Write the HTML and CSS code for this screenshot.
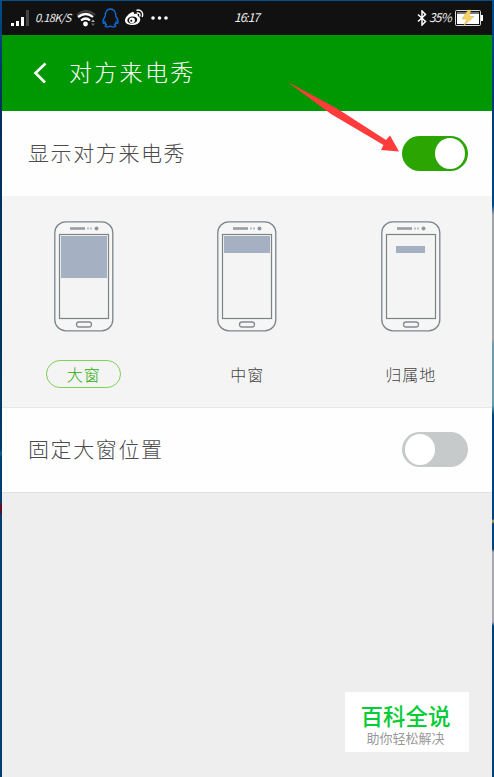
FILE: index.html
```html
<!DOCTYPE html>
<html lang="zh-CN">
<head>
    <meta charset="UTF-8">
    <meta name="viewport" content="width=device-width, initial-scale=1.0">
    <title>对方来电秀</title>
    <link rel="stylesheet" href="styles.css">
</head>
<body>
    <div class="screen">
        <div class="status-bar">
            <div class="status-left">
                <svg class="signal" width="18" height="16" viewBox="0 0 18 16">
                    <path d="M0 13h3v3H0zM5 11h3v5H5zM10 7h3v9h-3z" fill="#fff"/>
                    <path d="M15 0h3v16h-3z" fill="#444"/>
                </svg>
                <span class="speed">0.18K/S</span>
                <svg class="wifi" width="20" height="17" viewBox="0 0 20 17">
                    <path d="M1 5Q10-3 19 5" fill="none" stroke="#444" stroke-width="2"/>
                    <path d="M2 7Q10 1 17 7M5 10.5Q10 6.5 14 10.5" fill="none" stroke="#fff" stroke-width="2.2"/>
                    <circle cx="9.5" cy="14" r="2.4" fill="#fff"/>
                    <path d="M15 12l2-2.5 2 2.5z" fill="#aaa"/>
                    <path d="M15 13.5h4L17 16z" fill="#666"/>
                </svg>
                <svg class="qq" width="17" height="20" viewBox="0 0 17 20">
                    <path d="M3.3 8C3 3.5 5.3 1 8.5 1s5.5 2.5 5.2 7c1.7 2.3 2.6 5 2.2 7-.4.8-1.2.2-1.8-1-.3 1.3-.8 2-1.5 2.7 1.2.5 1.5 1.2.9 1.8-.9.7-3.8.6-5-.4-1.200 1-4.100 1.100-5 .4-.6-.6-.3-1.300.9-1.800-.7-.7-1.200-1.400-1.500-2.700-.6 1.200-1.400 1.800-1.800 1-.4-2 .5-4.700 2.200-7z" fill="none" stroke="#0b6fdc" stroke-width="1.300"/>
                </svg>
                <svg class="weibo" width="19" height="17" viewBox="0 0 19 17">
                    <path d="M7 3.300c1.500-.7 2.500.2 2 2 2.400-1 4.500-.4 3.700 1.700 5 2 2.500 9-5 9C2 16 0 13.800 0 11.500 0 8.500 4 4.500 7 3.300z" fill="#fff"/>
                    <ellipse cx="7.300" cy="11" rx="5" ry="3.500" fill="#111" transform="rotate(-8 7.300 11)"/>
                    <circle cx="7" cy="11.300" r="2.900" fill="#fff"/>
                    <circle cx="6.300" cy="11.800" r="1" fill="#111"/>
                    <path d="M12 1.200c4-.8 6.600 2.500 5.300 6.300M12.200 4c2-.3 3.200 1 2.600 3" fill="none" stroke="#fff" stroke-width="1.400" stroke-linecap="round"/>
                </svg>
                <svg class="more" width="17" height="4" viewBox="0 0 17 4">
                    <circle cx="2" cy="2" r="1.800" fill="#fff"/>
                    <circle cx="8.500" cy="2" r="1.800" fill="#fff"/>
                    <circle cx="15" cy="2" r="1.800" fill="#fff"/>
                </svg>
            </div>
            <span class="time">16:17</span>
            <div class="status-right">
                <svg class="bluetooth" width="10" height="16" viewBox="0 0 10 16">
                    <path d="M1 4.500l7.500 7L5 15V1l3.500 3.500L1 11.500" fill="none" stroke="#fff" stroke-width="1.500"/>
                </svg>
                <span class="percent">35%</span>
                <svg class="battery" width="28" height="18" viewBox="0 0 28 18">
                    <rect x=".5" y="1.500" width="25" height="15" rx="1" fill="#111" stroke="#ddd"/>
                    <path d="M2 3h22v2H2z" fill="#777"/>
                    <path d="M2 5h22v10H2zM26 6h2v6h-2z" fill="#fff"/>
                    <path d="M13 1L7 10h5l-3.500 7L19 7.500h-5L16 1z" fill="#fad45c" stroke="#bba25d" stroke-width=".4"/>
                </svg>
            </div>
        </div>

        <div class="header">
            <svg class="back" width="14" height="22" viewBox="0 0 14 22">
                <path d="M12.500 1.500L2.500 11l9.500 9.500" fill="none" stroke="#fff" stroke-width="2.600"/>
            </svg>
            <h1>对方来电秀</h1>
        </div>

        <div class="row">
            <span class="label">显示对方来电秀</span>
            <div class="switch on"><div class="knob"></div></div>
        </div>

        <div class="options">
            <div class="option selected">
                <svg class="phone" width="60" height="111" viewBox="0 0 60 111">
                    <rect x=".8" y=".8" width="58" height="109" rx="11" fill="#f6f6f6" stroke="#7c858a" stroke-width="1.300"/>
                    <path d="M16 7.500h15" stroke="#999ea2" stroke-width="2.600"/>
                    <path d="M33 7.500h2M36 7.500h2" stroke="#b3bec8" stroke-width="2"/>
                    <circle cx="42.500" cy="7.500" r="2" fill="#92979b"/>
                    <rect x="5.500" y="13.500" width="49" height="84" fill="#f4f4f4" stroke="#7b8383" stroke-width="1.200"/>
                    <rect x="7" y="15" width="46" height="42" fill="#a5b1c3"/>
                    <rect x="22.500" y="101" width="15" height="5" rx="2.500" fill="none" stroke="#858b91" stroke-width="1.300"/>
                </svg>
                <span class="name">大窗</span>
            </div>
            <div class="option">
                <svg class="phone" width="60" height="111" viewBox="0 0 60 111">
                    <rect x=".8" y=".8" width="58" height="109" rx="11" fill="#f6f6f6" stroke="#7c858a" stroke-width="1.300"/>
                    <path d="M16 7.500h15" stroke="#999ea2" stroke-width="2.600"/>
                    <path d="M33 7.500h2M36 7.500h2" stroke="#b3bec8" stroke-width="2"/>
                    <circle cx="42.500" cy="7.500" r="2" fill="#92979b"/>
                    <rect x="5.500" y="13.500" width="49" height="84" fill="#f4f4f4" stroke="#7b8383" stroke-width="1.200"/>
                    <rect x="7" y="15" width="46" height="17" fill="#a5b1c3"/>
                    <rect x="22.500" y="101" width="15" height="5" rx="2.500" fill="none" stroke="#858b91" stroke-width="1.300"/>
                </svg>
                <span class="name">中窗</span>
            </div>
            <div class="option">
                <svg class="phone" width="60" height="111" viewBox="0 0 60 111">
                    <rect x=".8" y=".8" width="58" height="109" rx="11" fill="#f6f6f6" stroke="#7c858a" stroke-width="1.300"/>
                    <path d="M16 7.500h15" stroke="#999ea2" stroke-width="2.600"/>
                    <path d="M33 7.500h2M36 7.500h2" stroke="#b3bec8" stroke-width="2"/>
                    <circle cx="42.500" cy="7.500" r="2" fill="#92979b"/>
                    <rect x="5.500" y="13.500" width="49" height="84" fill="#f4f4f4" stroke="#7b8383" stroke-width="1.200"/>
                    <rect x="15" y="25" width="29" height="7" fill="#a5b1c3"/>
                    <rect x="22.500" y="101" width="15" height="5" rx="2.500" fill="none" stroke="#858b91" stroke-width="1.300"/>
                </svg>
                <span class="name">归属地</span>
            </div>
        </div>

        <div class="row last">
            <span class="label">固定大窗位置</span>
            <div class="switch"><div class="knob"></div></div>
        </div>

        <div class="watermark">
            <strong>百科全说</strong>
            <span>助你轻松解决</span>
        </div>

        <!-- red pointer to the switch -->
        <svg class="arrow" width="114" height="72" viewBox="0 0 114 72">
            <path d="M1 .5L51 27.500 100 59l4-4.500 9 16-18-1.500 2.500-5L45 33z" fill="#ff3b3b"/>
        </svg>
    </div>
</body>
</html>
```

FILE: styles.css
```css
* {
    box-sizing: border-box;
}
body {
    margin: 0;
    height: 777px;
    padding: 1px 2px 0;
    overflow: hidden;
    font-family: "Noto Sans CJK SC", sans-serif;
    background:
        linear-gradient(#004c8c 0, #002f5c 110px, #003a68 450px, #0b6590 453px, #003e72 457px, #003e72 502px, #5c1028 504px, #5c1028 512px, #003e72 515px) left / 2px 100% no-repeat,
        linear-gradient(#004c8c 0, #003b70 110px, #004681 205px, #a2a3aa 215px, #a2a3aa 338px, #6b9bac 345px, #6b9bac 405px, #00427c 415px, #00427c 519px, #c4b742 521px, #00427c 524px, #00427c 549px, #aaa7b4 552px, #aaa7b4 622px, #003e72 626px) right / 2px 100% no-repeat,
        #00508f;
}
.screen {
    position: relative;
    display: flex;
    flex-direction: column;
    height: 776px;
    background: #eee;
}
.status-bar {
    display: grid;
    grid-template-columns: 232px 1fr auto;
    align-items: center;
    height: 34px;
    padding-right: 9px;
    color: #eee;
    background: #111;
    font-size: 12px;
    font-style: italic;
}
.status-left, .status-right {
    display: flex;
    align-items: center;
}
.status-left {
    padding-left: 9px;
}
.speed {
    width: 38px;
    margin: -3px 3px 0 6px;
    font-size: 11px;
    letter-spacing: -0.5px;
    white-space: nowrap;
}
.qq {
    margin-left: 6px;
}
.weibo {
    margin: -1px 0 0 6px;
}
.more {
    margin-left: 7px;
}
.time {
    margin-top: -3px;
    letter-spacing: -1px;
}
.percent {
    width: 23px;
    margin: -3px 3px 0 2px;
    letter-spacing: -0.8px;
}
.header {
    display: flex;
    align-items: center;
    height: 76px;
    padding-left: 31px;
    color: #fff;
    background: #009802;
}
h1 {
    margin: 0 0 4px 22px;
    font-size: 23px;
    font-weight: 300;
    letter-spacing: 2.3px;
}
.row {
    display: flex;
    align-items: center;
    justify-content: space-between;
    height: 85px;
    padding: 0 24px 0 26px;
    background: #fefefe;
}
.row.last {
    height: 86px;
    padding-bottom: 2px;
    border-top: 1px solid #e8e8e8;
    border-bottom: 1px solid #e2e2e2;
}
.label {
    padding-bottom: 3px;
    color: #4b4b4b;
    font-size: 21px;
    font-weight: 300;
    letter-spacing: 1.6px;
}
.switch {
    display: flex;
    width: 66px;
    height: 35px;
    padding: 2px 3px;
    border-radius: 18px;
    background: #c6caca;
}
.switch.on {
    justify-content: flex-end;
    background: #2aa502;
}
.knob {
    width: 30px;
    height: 31px;
    border-radius: 50%;
    background: #fff;
}
.options {
    display: grid;
    grid-template-columns: repeat(3, 163.5px);
    height: 211px;
    padding-top: 25px;
    background: #f4f4f4;
}
.option {
    display: flex;
    flex-direction: column;
    align-items: center;
}
.name {
    display: flex;
    align-items: center;
    justify-content: center;
    width: 75px;
    height: 28px;
    margin-top: 28px;
    padding-bottom: 1px;
    border: 1px solid transparent;
    border-radius: 14px;
    color: #444;
    font-size: 16px;
    font-weight: 300;
    letter-spacing: 1px;
}
.selected .name {
    border-color: #7fd158;
    color: #2dab0b;
}
.watermark {
    display: flex;
    flex-direction: column;
    align-items: center;
    align-self: flex-end;
    width: 124px;
    height: 60px;
    margin: auto 23px 25px 0;
    padding: 10px 3px 0 0;
    background: #fff;
}
.watermark strong {
    color: #06cc38;
    font-size: 22.5px;
    font-weight: 500;
    line-height: 27px;
}
.watermark span {
    color: #999;
    font-size: 13px;
    line-height: 17px;
}
.arrow {
    position: absolute;
    left: 284px;
    top: 80px;
}
```
